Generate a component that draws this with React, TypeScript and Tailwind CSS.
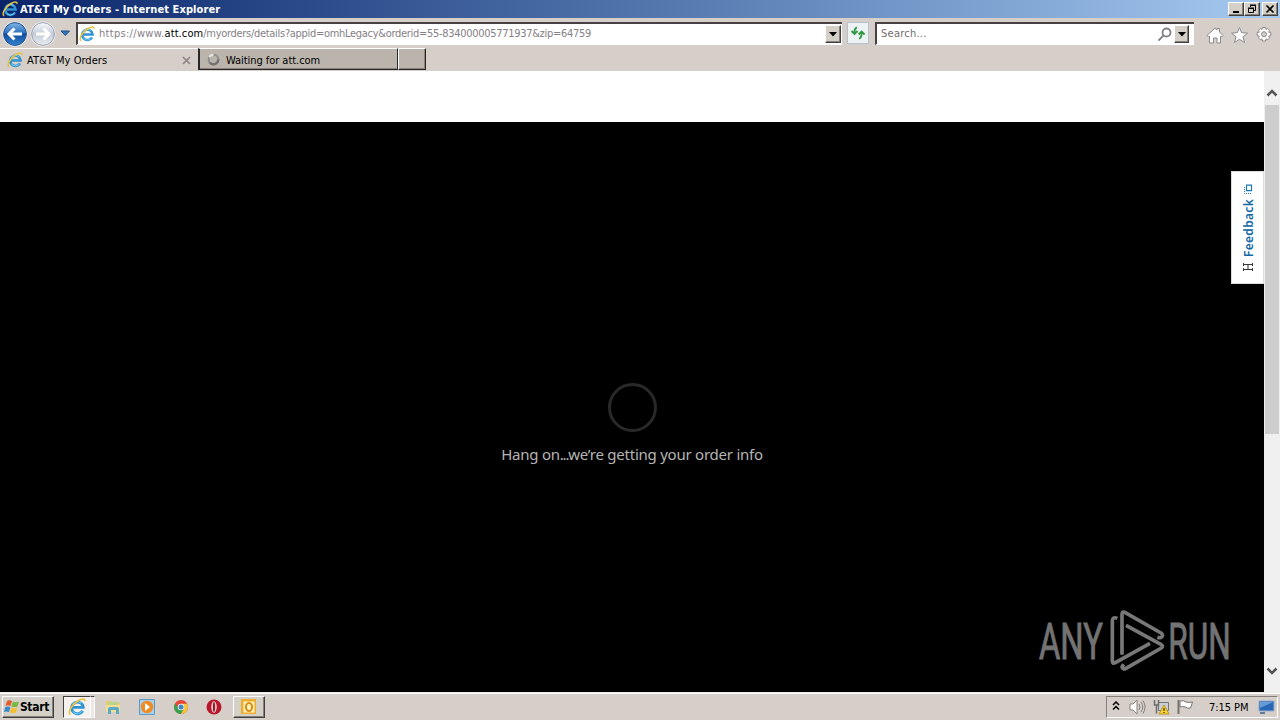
import type { ReactNode } from "react";

const ui = "font-['DejaVu_Sans_Condensed','DejaVu_Sans',sans-serif]";

function IeLogo({ size }: { size: number }) {
  return (
    <svg width={size} height={size} viewBox="0 0 16 16" fill="none" className="shrink-0">
      <path d="M13 11.300A5.200 5.200 0 1 1 13.600 8.400H4.500" stroke="#2f93d3" strokeWidth="2.500" />
      <path d="M12.600 11.600A5 5 0 0 1 4.200 11.800" stroke="#6ccbf2" strokeWidth="1" />
      <path d="M4.200 5.400A5.200 5.200 0 0 1 11.800 4.700" stroke="#7bd0f3" strokeWidth="1" />
      <path d="M2.200 14.700C-.8 13.300 3 6.200 9 2.500 12.400.4 15.100.2 15 2.900" stroke="#e8c23c" strokeWidth="1.500" />
    </svg>
  );
}

function ArrowButton({ forward }: { forward?: boolean }) {
  return (
    <svg width="26" height="26" viewBox="0 0 26 26" className="shrink-0">
      <defs>
        <linearGradient id="back" x1="0" y1="0" x2="0" y2="1">
          <stop stopColor="#82b6e5" />
          <stop offset=".45" stopColor="#2e71bd" />
          <stop offset=".5" stopColor="#12499b" />
          <stop offset="1" stopColor="#3287d0" />
        </linearGradient>
        <linearGradient id="next" x1="0" y1="0" x2="0" y2="1">
          <stop stopColor="#f7f9fc" />
          <stop offset=".5" stopColor="#c4ccd8" />
          <stop offset="1" stopColor="#e9edf2" />
        </linearGradient>
      </defs>
      <circle cx="13" cy="13" r="12.5" fill="#f1f4f8" />
      <circle cx="13" cy="13" r="11.4" fill={forward ? "url(#next)" : "url(#back)"} stroke={forward ? "#98a1b2" : "#204f8d"} strokeWidth="1" />
      <path
        d={forward ? "M6 13H19M13.5 7.5 19 13l-5.5 5.5" : "M20 13H7M12.5 7.5 7 13l5.5 5.5"}
        fill="none"
        stroke="#fff"
        strokeWidth="3"
      />
    </svg>
  );
}

function Bevel({ className, children }: { className: string; children?: ReactNode }) {
  return (
    <div
      className={`flex shrink-0 items-center justify-center border border-t-white border-l-white border-r-[#404040] border-b-[#404040] bg-[#d4d0c8] shadow-[inset_-1px_-1px_0_#85817a] ${className}`}
    >
      {children}
    </div>
  );
}

function DropArrow() {
  return (
    <svg width="8" height="5" viewBox="0 0 8 5">
      <path d="M0 0h8L4 4.5z" fill="#000" />
    </svg>
  );
}

function TitleBar() {
  return (
    <div className="flex h-[18px] items-center bg-linear-to-r from-[#0a246a] to-[#a6caf0] pr-[2px] pl-[2px]">
      <IeLogo size={16} />
      <span className={`${ui} mt-px ml-[2px] text-[11px] leading-[14px] font-bold tracking-[0.1px] whitespace-nowrap text-white`}>
        AT&amp;T My Orders - Internet Explorer
      </span>
      <div className="ml-auto flex">
        <Bevel className="h-[14px] w-[16px]">
          <svg width="10" height="10"><path d="M2 7h6v2H2z" /></svg>
        </Bevel>
        <Bevel className="h-[14px] w-[16px]">
          <svg width="10" height="10" fill="none" stroke="#000">
            <path d="M3.5 3V1.5h5v5H7M3 1h6M1.5 4.5h5v4h-5zM1 4h6" />
          </svg>
        </Bevel>
        <Bevel className="ml-[2px] h-[14px] w-[16px]">
          <svg width="10" height="10" fill="none" stroke="#000" strokeWidth="1.6"><path d="m1.5 1.5 7 7m0-7-7 7" /></svg>
        </Bevel>
      </div>
    </div>
  );
}

function NavBar() {
  return (
    <div className="flex h-[30px] items-start bg-[#d5cec9] pt-[3px] pl-[2px]">
      <div className="flex gap-[2px]">
        <ArrowButton />
        <ArrowButton forward />
      </div>
      <svg width="11" height="7" viewBox="0 0 11 7" className="mt-[9px] ml-[4px]">
        <path d="M1 1h8.5L5.3 5.5z" fill="#2f76bd" stroke="#234e87" />
      </svg>
      <div className="mt-px ml-[5px] flex h-[23px] w-[766px] items-center border-t-2 border-b border-l-2 border-t-[#494044] border-b-white border-l-[#494044] bg-white pr-px pl-px">
        <IeLogo size={16} />
        <span className={`${ui} mt-px ml-[4px] flex text-[11px] whitespace-nowrap text-[#858085]`}>
          <span className="tracking-[0.3px]">https://www.</span>
          <span className="tracking-[0.1px] text-black">att.com</span>
          <span className="tracking-[-0.3px]">/myorders/details?appid=omhLegacy&amp;orderid=55-834000005771937&amp;zip=64759</span>
        </span>
        <Bevel className="ml-auto h-[18px] w-[16px]"><DropArrow /></Bevel>
      </div>
      <div className="mt-px ml-[5px] flex h-[22px] w-[22px] items-center justify-center border border-[#b5c1ce] bg-[#edf2f5]">
        <svg width="16" height="16" viewBox="0 0 16 16" fill="none" stroke="#2e9940" strokeWidth="1.8">
          <path d="M7 2.5C4.5 3 4.4 5 4.4 8M1.5 6l3 3 3-3M9 13.5c2.5-.5 2.6-2.5 2.6-5.500M8.600 9.500l3-3 3 3" />
        </svg>
      </div>
      <div className="mt-px ml-[6px] flex h-[23px] w-[319px] items-center border-t-2 border-b border-l-2 border-t-[#494044] border-b-white border-l-[#494044] bg-white pr-[5px] pl-[4px]">
        <span className={`${ui} mt-px text-[11px] tracking-[0.25px] text-[#706d70]`}>Search...</span>
        <svg width="14" height="15" viewBox="0 0 14 15" fill="none" stroke="#817f85" strokeWidth="1.8" className="mr-[2px] ml-auto">
          <circle cx="8.500" cy="5.500" r="4" /><path d="m5.500 8.500-5 5" />
        </svg>
        <Bevel className="h-[18px] w-[15px]"><DropArrow /></Bevel>
      </div>
      <svg width="70" height="20" viewBox="0 0 70 20" fill="#fff" stroke="#8d8a8b" className="mt-[5px] ml-[12px]">
        <path d="M1 9.500 9 2l2 2V2.500h2.500V6L17 9.500l-1.500 1.500-1-1v7h-3.500v-5H7.500v5H3.500v-7l-1 1z" />
        <path d="m33.500 1.500 2.100 5.200 5.900.4-4.500 3.600 1.500 5.800-5-3.200-5 3.200 1.500-5.800-4.500-3.600 5.900-.4z" />
        <path d="m56.500 1.500 3 0 .5 2 1.600-1 2 2-1 1.600 2.200.500v3l-2.200.500 1 1.700-2 2-1.600-1-.5 2.200h-3l-.5-2.200-1.600 1-2-2 1-1.700-2.200-.500v-3l2.200-.500-1-1.600 2-2 1.600 1z" />
        <circle cx="58" cy="8.200" r="2.500" fill="#d5cec9" />
      </svg>
    </div>
  );
}

function Tabs() {
  return (
    <div className={`${ui} flex h-[23px] bg-[#d5cec9] text-[11px] text-black`}>
      <div className="flex h-[23px] w-[198px] items-center border-t border-t-white pr-[7px] pl-[7px]">
        <IeLogo size={16} />
        <span className="mt-[2px] ml-[4px] tracking-[0.03px]">AT&amp;T My Orders</span>
        <svg width="9" height="9" fill="none" stroke="#8b8482" strokeWidth="1.700" className="ml-auto"><path d="m1 1 7 7m0-7-7 7" /></svg>
      </div>
      <div className="flex h-[22px] w-[200px] items-center border-t border-r border-b border-l-2 border-t-white border-r-[#292729] border-b-[#292729] border-l-[#292729] bg-[#bbb4ad] pl-[7px] shadow-[inset_0_-1px_0_#8a847f]">
        <svg width="13" height="13" fill="none" strokeWidth="2.200" className="shrink-0">
          <circle cx="6.500" cy="6.500" r="4.800" stroke="#929090" />
          <path d="M2.300 4.100A4.800 4.800 0 0 1 6.500 1.700" stroke="#e6e3e1" />
          <path d="M11.300 6.500A4.800 4.800 0 0 1 3 9.700" stroke="#716f70" />
        </svg>
        <span className="mt-[4px] ml-[6px] tracking-[-0.05px]">Waiting for att.com</span>
      </div>
      <div className="h-[22px] w-[28px] border-t border-r border-b border-l border-t-white border-r-[#292729] border-b-[#292729] border-l-white bg-[#bbb4ad] shadow-[inset_-1px_-1px_0_#8a847f]" />
    </div>
  );
}

function Watermark() {
  return (
    <svg width="199" height="65" viewBox="57 39 597 195" fill="none" className="absolute right-[26px] bottom-[19px] overflow-visible">
      <g fill="#737373" stroke="#737373" strokeWidth="3" className="font-['Roboto',sans-serif]" fontSize="152">
        <text transform="translate(57 192) scale(.645 1)">ANY</text>
        <text transform="translate(445 192) scale(.622 1)">RUN</text>
      </g>
      <g stroke="#787878" strokeWidth="11" strokeLinejoin="round">
        <path d="M306 179V59Q306 47 316 53L423 114Q431 120 425 126Q421 130 412 127" />
        <path d="M318 91 424 149Q431 154 424 159L318 220Q309 225 306 216L311 208" />
        <path d="M292 70Q277 64 277 78V198Q277 208 286 203L390 145" />
      </g>
    </svg>
  );
}

function Page() {
  return (
    <div className="flex h-[621px] bg-white">
      <div className="relative flex w-[1264px] flex-col pt-[51px]">
        <main className="flex flex-1 flex-col items-center bg-black pt-[261px]">
          <div className="h-[49px] w-[49px] rounded-full border-[3px] border-[#292929]" />
          <p className="mt-[11px] font-['Noto_Sans',sans-serif] text-[15px] leading-[22px] tracking-[-0.24px] whitespace-nowrap text-[#b5b5b5]">
            Hang on<span className="tracking-[-1.2px]">...</span>we’re getting your order info
          </p>
        </main>
        <div className="absolute top-[100px] right-0 flex h-[113px] w-[33px] items-center justify-center border border-[#ddd] bg-white pl-[2px]">
          <div className="flex rotate-180 items-center gap-[6px] [writing-mode:vertical-rl]">
            <svg width="10" height="8" fill="none" stroke="#333"><path d="M.5 0v3m0 2v3M9.500 0v3m0 2v3M0 1.500h10M0 6.500h10M5 1.500v5" /></svg>
            <span className="font-['Noto_Sans',sans-serif] text-[12px] leading-[15px] font-semibold tracking-[0.3px] text-[#1268a2]">Feedback</span>
            <svg width="9" height="10" fill="none" stroke="#1f78b2" className="-mt-[1px] rotate-180"><path d="M2.500 1h5v5.500h-5z" strokeWidth="1.200" /><path d="M.5 3v6.500H7" strokeDasharray="1 1" /></svg>
          </div>
        </div>
        <Watermark />
      </div>
      <div className="flex w-[16px] flex-col items-center bg-[#f0f0f0] pt-[18px]">
        <svg width="12" height="8" fill="none" stroke="#555" strokeWidth="2.500"><path d="m1.500 6.500 4.500-4.500 4.500 4.500" /></svg>
        <div className="mt-[8px] h-[329px] w-[14px] bg-[#cdcdcd]" />
        <svg width="12" height="8" fill="none" stroke="#555" strokeWidth="2.500" className="mt-auto mb-[17px]"><path d="m1.500 1.500 4.500 4.500 4.500-4.500" /></svg>
      </div>
    </div>
  );
}

function Taskbar() {
  return (
    <div className={`${ui} flex h-[28px] items-start border-t border-[#ece9e5] bg-[#d5cec9] pt-[3px] pl-[2px] text-[11px] text-black shadow-[inset_0_1px_0_#fff]`}>
      <Bevel className="h-[22px] w-[52px] pr-[3px]">
        <svg width="16" height="16" viewBox="0 0 16 16" className="shrink-0">
          <path d="M3 2Q5 .5 8 2L6.600 7Q4 5.700 1.500 7z" fill="#e35a2b" />
          <path d="M9 2.500q3 1.400 6 0L13.500 7.500q-3 1.200-6 0z" fill="#78b843" />
          <path d="M1.300 8Q4 6.800 6.300 8L5 13Q2.300 11.800 0 13z" fill="#3488cb" />
          <path d="M7.300 8.500q3 1.300 6 0L12 13.500q-3 1.300-6 0z" fill="#f5bf34" />
        </svg>
        <span className="text-[12px] font-bold tracking-[-0.3px]">Start</span>
      </Bevel>
      <div className="ml-[9px] flex h-[22px] w-[28px] items-center justify-center border border-t-[#404040] border-r-white border-b-white border-l-[#404040] bg-[#f4f1ee]">
        <IeLogo size={18} />
      </div>
      <div className="h-[22px] w-[4px] border-t border-r border-t-[#404040] border-r-white bg-[#ece8e5]" />
      <svg width="18" height="18" viewBox="0 0 18 18" className="mt-[2px] ml-[9px]">
        <path d="M2 3h5l1 2h8v9H2z" fill="#e9cc69" /><path d="M4 4h10v5H4z" fill="#b9d58c" /><path d="M2 7h14v7H2z" fill="#f3df93" /><path d="M4 16v-5q0-2 2-2h7q2 0 2 2v5h-3v-4H7v4z" fill="#59aac9" />
      </svg>
      <svg width="18" height="18" viewBox="0 0 18 18" className="mt-[2px] ml-[16px]">
        <path d="M1.500 1.500h15v15h-15z" fill="#a9cfe8" stroke="#5c9bc9" /><circle cx="9" cy="9" r="6.200" fill="#ef8b22" /><path d="m7 5 5 4-5 4z" fill="#fff" />
      </svg>
      <svg width="14" height="14" viewBox="0 0 14 14" className="mt-[4px] ml-[18px]">
        <circle cx="7" cy="7" r="7" fill="#e64436" /><path d="M1 3.500A7 7 0 0 0 7 14l3-5.300-6-1z" fill="#35a252" /><path d="M7 14A7 7 0 0 0 13 3.700H7l3 5z" fill="#f8c936" /><circle cx="7" cy="7" r="3.300" fill="#f5f7fa" /><circle cx="7" cy="7" r="2.500" fill="#4285c4" />
      </svg>
      <svg width="16" height="16" viewBox="0 0 16 16" className="mt-[3px] ml-[18px]">
        <circle cx="8" cy="8" r="7.500" fill="#b9182c" /><ellipse cx="8" cy="8" rx="2.700" ry="5.700" fill="#eee7e3" /><ellipse cx="8" cy="8" rx="1.200" ry="5" fill="#a71726" />
      </svg>
      <Bevel className="ml-[11px] h-[22px] w-[32px]">
        <svg width="18" height="18" viewBox="0 0 18 18">
          <path d="M1 1h15v15H1z" fill="#efad2d" /><path d="M3.500 3.500h11v11h-11z" fill="#fff2b8" /><ellipse cx="9" cy="9" rx="3.100" ry="4" fill="none" stroke="#d98d19" strokeWidth="2" />
        </svg>
      </Bevel>
      <div className="mr-[2px] ml-auto flex h-[22px] w-[172px] items-center border border-t-[#85817a] border-r-white border-b-white border-l-[#85817a] pl-[5px]">
        <svg width="8" height="10" fill="none" stroke="#000" strokeWidth="1.500" className="-mt-[2px]"><path d="m1 4 3-3 3 3M1 8.500l3-3 3 3" /></svg>
        <svg width="17" height="16" viewBox="0 0 17 16" fill="none" stroke="#85817e" className="ml-[9px]">
          <path d="M1 5h3l4-4v14l-4-4H1z" fill="#fff" /><path d="M10 5q2 3 0 6m2-8q3.500 5 0 10m2-11.500q4 6.500 0 13" />
        </svg>
        <svg width="17" height="16" viewBox="0 0 17 16" className="ml-[7px]">
          <path d="M5.500 3.500h10v8h-10zM8 14h6" fill="#c8d0d5" stroke="#777" /><path d="M1.500 1v5h4V1M3.500 6v8.500" fill="none" stroke="#6f6d6c" strokeWidth="1.500" /><path d="m11 6 5 9H6z" fill="#ffd735" stroke="#b9941f" /><path d="M10.500 9h1v3h-1zM10.500 13h1v1h-1z" />
        </svg>
        <svg width="17" height="16" viewBox="0 0 17 16" fill="#fff" stroke="#777371" className="ml-[7px]">
          <path d="M1.500 1v14" strokeWidth="2" /><path d="M3 2q4-1 6 1 3 1 6.500 0l-2 6q-3 1-5-1-3-1-5.500 0z" />
        </svg>
        <span className="mt-[2px] ml-[15px] tracking-[-0.05px] whitespace-nowrap">7:15 PM</span>
        <svg width="17" height="14" viewBox="0 0 17 14" className="mr-[2px] ml-auto shrink-0">
          <path d="M1 1h15v10H1z" fill="#2867b5" stroke="#93acc8" /><path d="M2 2h13L2 8z" fill="#669cd8" /><path d="M2 12h5v2H2z" fill="#607b98" />
        </svg>
      </div>
    </div>
  );
}

export default function App() {
  return (
    <div className="h-[720px] w-[1280px] overflow-hidden bg-[#d5cec9]">
      <TitleBar />
      <NavBar />
      <Tabs />
      <Page />
      <Taskbar />
    </div>
  );
}
